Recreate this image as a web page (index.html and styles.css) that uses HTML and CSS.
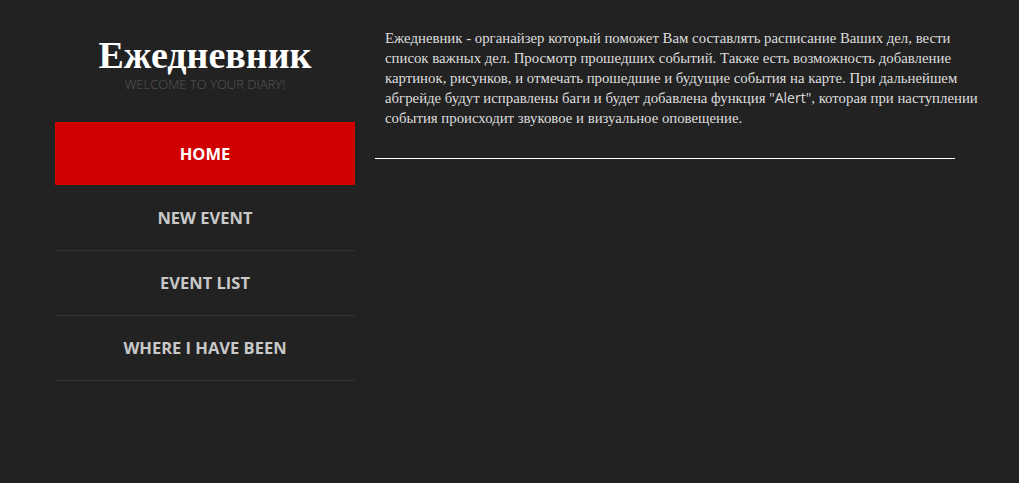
FILE: index.html
```html
<!DOCTYPE html>
<html lang="ru">
<head>
<meta charset="utf-8">
<title>Ежедневник</title>
<link rel="stylesheet" href="styles.css">
</head>
<body>
<div class="page">
  <aside class="sidebar">
    <header class="brand">
      <h1 class="brand-title">Ежедневник</h1>
      <p class="brand-sub">WELCOME TO YOUR DIARY!</p>
    </header>
    <nav class="menu">
      <a class="menu-item active" href="#">HOME</a>
      <a class="menu-item" href="#">NEW EVENT</a>
      <a class="menu-item" href="#">EVENT LIST</a>
      <a class="menu-item" href="#">WHERE I HAVE BEEN</a>
    </nav>
  </aside>
  <main class="content">
    <p class="intro">Ежедневник - органайзер который поможет Вам составлять расписание Ваших дел, вести список важных дел. Просмотр прошедших событий. Также есть возможность добавление картинок, рисунков, и отмечать прошедшие и будущие события на карте. При дальнейшем абгрейде будут исправлены баги и будет добавлена функция <span class="sans">"Alert"</span>, которая при наступлении события происходит звуковое и визуальное оповещение.</p>
    <hr class="rule">
  </main>
</div>
</body>
</html>
```

FILE: styles.css
```css
html, body {
  margin: 0;
  padding: 0;
  background: #222222;
  height: 100%;
}
.page {
  display: flex;
  padding-left: 55px;
}
.sidebar {
  width: 300px;
  flex: none;
}
.brand {
  text-align: center;
  padding-top: 35px;
  height: 122px;
  box-sizing: border-box;
}
.brand-title {
  margin: 0;
  font-family: "Liberation Serif", serif;
  font-weight: bold;
  font-size: 38px;
  line-height: 40px;
  color: #ffffff;
}
.brand-sub {
  margin: 2px 0 0;
  font-family: "Open Sans", sans-serif;
  font-weight: 300;
  font-size: 13px;
  line-height: 14px;
  color: #585858;
}
.menu {
  display: flex;
  flex-direction: column;
}
.menu-item {
  display: block;
  height: 64px;
  line-height: 64px;
  text-align: center;
  font-family: "Open Sans", sans-serif;
  font-weight: bold;
  font-size: 16.5px;
  color: #c8c8c8;
  text-decoration: none;
  border-bottom: 1px solid #333333;
}
.menu-item.active {
  background: #d00000;
  background-clip: padding-box;
  color: #ffffff;
  height: 63px;
  line-height: 63px;
  border-bottom: 1px solid #222222;
}
.content {
  margin-left: 20px;
  width: 620px;
  padding-top: 28px;
}
.intro {
  margin: 0 0 0 10px;
  width: 604px;
  font-family: "Liberation Serif", serif;
  font-size: 14.8px;
  line-height: 20px;
  color: #dddddd;
}
.sans {
  font-family: "Open Sans", sans-serif;
  font-size: 14px;
  line-height: 1;
}
.rule {
  margin: 30px 0 0;
  width: 580px;
  border: 0;
  border-top: 1px solid #ffffff;
  height: 0;
}
```
